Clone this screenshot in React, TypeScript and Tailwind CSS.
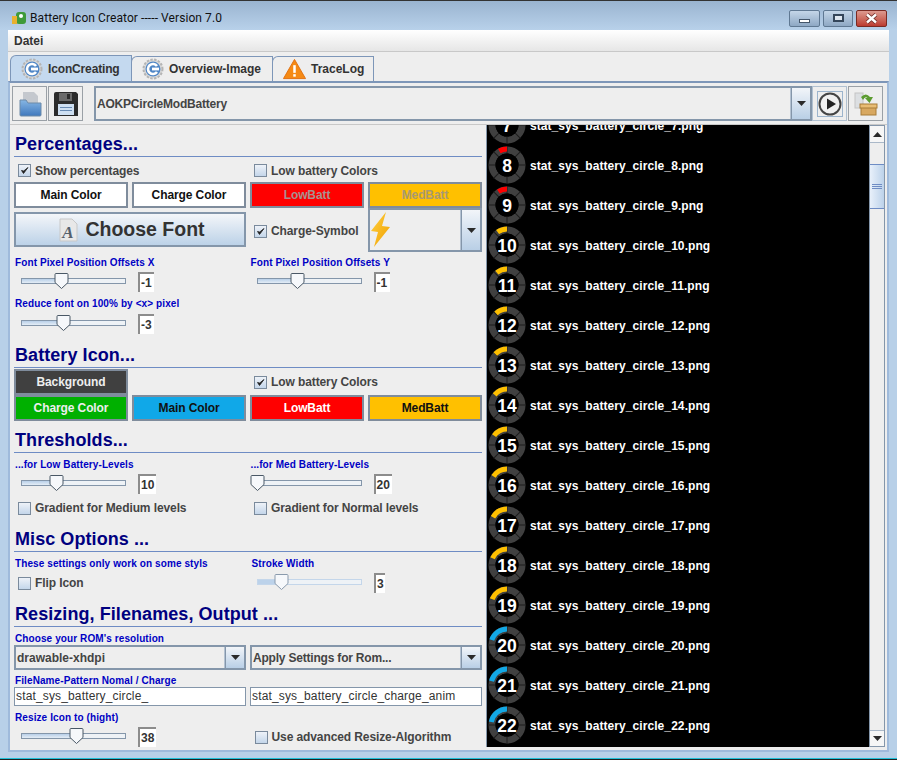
import { ReactNode } from 'react';

const FONT = "font-['Liberation_Sans',Arial,sans-serif]";

// battery row numbers visible in the list
const ROWS = Array.from({ length: 16 }, (_, i) => i + 7);

function arcColor(level: number) {
  if (level < 10) return '#ff0000';
  if (level < 20) return '#ffc000';
  return '#12a8e6';
}

function polar(r: number, deg: number) {
  const a = ((deg - 90) * Math.PI) / 180;
  return `${(20 + r * Math.cos(a)).toFixed(2)} ${(20 + r * Math.sin(a)).toFixed(2)}`;
}

function BatteryRing({ level }: { level: number }) {
  const angle = level * 3.6;
  return (
    <svg width="40" height="40" viewBox="0 0 40 40" className="shrink-0">
      <circle cx="20" cy="20" r="15" fill="none" stroke="#404040" strokeWidth="7" />
      {[0, 45, 90, 135].map((d) => (
        <line key={d} x1={20} y1={1} x2={20} y2={39} stroke="#1c1c1c" strokeWidth="1" transform={`rotate(${d} 20 20)`} />
      ))}
      <circle cx="20" cy="20" r="11.5" fill="#000" />
      <path
        d={`M ${polar(16, 0)} A 16 16 0 0 0 ${polar(16, -angle)}`}
        fill="none"
        stroke={arcColor(level)}
        strokeWidth="5"
      />
      <text x="20" y="26.5" textAnchor="middle" fontSize="17.5" fontWeight="700" fill="#fff" fontFamily="'Liberation Sans', Arial, sans-serif">
        {level}
      </text>
    </svg>
  );
}

function Heading({ children, className = '' }: { children: ReactNode; className?: string }) {
  return (
    <div className={`border-b border-[#6e8cc4] mx-[4px] flex items-end pb-[3px] text-[18px] font-bold tracking-[0.07px] text-[#000080] leading-none pl-px ${className}`}>
      {children}
    </div>
  );
}

function Label({ children, className = '' }: { children: ReactNode; className?: string }) {
  return <div className={`h-[12px] text-[10px] font-bold tracking-[0.1px] leading-[14px] text-[#0000c4] whitespace-nowrap ${className}`}>{children}</div>;
}

function Check({ label, checked = false, className = '' }: { label: string; checked?: boolean; className?: string }) {
  return (
    <div className={`flex items-center gap-[4px] text-[12px] font-bold tracking-[-0.1px] text-[#444] whitespace-nowrap ${className}`}>
      <span className="w-[13px] h-[13px] border border-[#7a8a9c] bg-gradient-to-b from-[#eef2f8] to-[#c4d6ea] flex items-center justify-center shrink-0">
        {checked && (
          <svg width="9" height="9" viewBox="0 0 9 9">
            <path d="M1.5 4.5 L3.5 7.5 L8 1.5 L3.7 5 Z" fill="#222" stroke="#222" strokeWidth="0.8" />
          </svg>
        )}
      </span>
      {label}
    </div>
  );
}

function ColorButton({ label, className = '' }: { label: string; className?: string }) {
  return (
    <div className={`h-[26px] border-2 border-[#7f8c9c] flex items-center justify-center text-[12px] font-bold tracking-[-0.1px] ${className}`}>{label}</div>
  );
}

function Slider({ pos, value, disabled = false, boxW = 'w-[16px]' }: { pos: number; value: string; disabled?: boolean; boxW?: string }) {
  const track = disabled ? 'border-[#c4d6ea]' : 'border-[#8496aa]';
  const fill = disabled ? 'bg-[#bcd2ea]' : 'bg-gradient-to-b from-[#b8cfe8] to-[#e4edf6]';
  return (
    <div className="flex items-center h-[20px] pl-[6px]">
      <div className={`relative w-[105px] h-[6px] mb-[2px] border ${track} bg-[#eef2f6]`}>
        <div className={`h-full ${fill}`} style={{ width: Math.max(0, pos + 6) }} />
        <svg width="16" height="17" viewBox="0 0 16 17" className="absolute top-[-6px]" style={{ left: pos - 1 }}>
          <path
            d="M1 1.5 Q1 .5 2 .5 H13 Q14 .5 14 1.5 V9.5 L7.5 15.5 L1 9.5 Z"
            fill="#f6f8fb"
            stroke={disabled ? '#8a9aac' : '#4a5866'}
          />
        </svg>
      </div>
      <div
        className={`ml-[12px] h-[20px] ${boxW} border-l-2 border-t-2 border-[#8c8c8c] bg-white text-[12px] font-bold text-[#333] leading-[18px] pl-px`}
      >
        {value}
      </div>
    </div>
  );
}

function ArrowButton({ className = '' }: { className?: string }) {
  return (
    <div className={`w-[19px] bg-gradient-to-b from-[#f2f5f9] to-[#b9cfe6] border-l border-[#8496aa] flex items-center justify-center ${className}`}>
      <svg width="9" height="5" viewBox="0 0 9 5">
        <path d="M0 0 H9 L4.5 5 Z" fill="#2a2a2a" />
      </svg>
    </div>
  );
}

function Combo({ text, className = '' }: { text: ReactNode; className?: string }) {
  return (
    <div className={`flex border-2 border-[#8496aa] bg-[#eeeeee] ${className}`}>
      <div className="flex-1 flex items-center pl-px text-[12px] font-bold text-[#444] whitespace-nowrap overflow-hidden border-r border-[#b4c2d2]">{text}</div>
      <ArrowButton />
    </div>
  );
}

function GearIcon() {
  return (
    <svg width="22" height="22" viewBox="0 0 22 22">
      <circle cx="11" cy="11" r="9.5" fill="#d8d8d8" stroke="#b4b4b4" strokeWidth="2" strokeDasharray="2.4 1.4" />
      <circle cx="11" cy="11" r="7.5" fill="#4f86c6" />
      <path d="M15 8 A5 5 0 1 0 15 14" fill="none" stroke="#fff" strokeWidth="2.6" />
      <rect x="10" y="9.6" width="7" height="2.8" fill="#fff" />
    </svg>
  );
}

function WarningIcon() {
  return (
    <svg width="23" height="22" viewBox="0 0 24 22">
      <path d="M12 1 L23.5 21 H.5 Z" fill="#f58a14" stroke="#e07010" strokeLinejoin="round" />
      <rect x="10.7" y="7" width="2.6" height="8" fill="#fff" />
      <rect x="10.7" y="16.4" width="2.6" height="2.6" fill="#fff" />
    </svg>
  );
}

function Tab({ icon, label, active = false, width }: { icon: ReactNode; label: string; active?: boolean; width: string }) {
  return (
    <div
      className={`${width} flex items-center border border-b-0 border-[#7d96b8] rounded-tl-[6px] text-[12px] font-bold text-[#333] gap-[5px] pl-[10px] -mr-px ${
        active ? 'h-[26px] bg-[#c4d9ef]' : 'h-[25px] bg-[#eeeeee]'
      }`}
    >
      {icon}
      <span className={active ? 'tracking-[-0.15px]' : ''}>{label}</span>
    </div>
  );
}

function ToolButton({ children, className = '' }: { children: ReactNode; className?: string }) {
  return <div className={`h-[35px] border border-[#9aa0a6] flex items-center justify-center ${className}`}>{children}</div>;
}

function WindowButton({ children, className = '' }: { children: ReactNode; className?: string }) {
  return (
    <div className={`h-[17px] rounded-[2px] border border-[#5f7892] flex items-center justify-center ${className}`}>{children}</div>
  );
}

export default function App() {
  return (
    <div className={`${FONT} w-[897px] h-[760px] overflow-hidden flex flex-col bg-[#b8d0e8] border-t border-[#333]`}>
      {/* title bar */}
      <div className="h-[29px] shrink-0 flex items-center pt-[5px] pl-[11px] pr-[10px] bg-gradient-to-b from-[#9ab4d0] to-[#b8d1ea]">
        <svg width="16" height="16" viewBox="0 0 16 16" className="mr-[3px]">
          <rect x="5" y="2" width="10" height="12" rx="3" fill="#3f9a3a" />
          <rect x="1" y="6" width="5" height="8" fill="#e8b030" />
          <circle cx="10" cy="6" r="2" fill="#fff" />
        </svg>
        <span className="font-['Roboto',sans-serif] text-[12px] tracking-[0.08px] text-[#111] whitespace-nowrap">Battery Icon Creator ----- Version 7.0</span>
        <div className="ml-auto flex gap-[3px]">
          <WindowButton className="w-[31px] bg-gradient-to-b from-[#c4d6e8] to-[#8ea8c4]">
            <span className="block w-[11px] h-[4px] mt-[5px] bg-white border border-[#44566a]" />
          </WindowButton>
          <WindowButton className="w-[30px] bg-gradient-to-b from-[#c4d6e8] to-[#8ea8c4]">
            <span className="block w-[11px] h-[8px] bg-white/60 border-2 border-[#34465a]" />
          </WindowButton>
          <WindowButton className="w-[31px] border-[#7a2a22] bg-gradient-to-b from-[#dc9a90] to-[#bb3a30]">
            <svg width="13" height="11" viewBox="0 0 13 11">
              <path d="M2 1.5 L11 9.5 M11 1.5 L2 9.5" stroke="#6a2a24" strokeWidth="4" />
              <path d="M2 1.5 L11 9.5 M11 1.5 L2 9.5" stroke="#fff" strokeWidth="2.4" />
            </svg>
          </WindowButton>
        </div>
      </div>

      {/* client area */}
      <div className="mx-[8px] shrink-0 bg-[#eeeeee] flex flex-col">
        <div className="h-[22px] shrink-0 flex items-center pl-[6px] pt-px bg-gradient-to-b from-white to-[#e6e6e6] border-b border-[#c8c8c8] text-[12px] font-bold text-[#333]">
          Datei
        </div>

        <div className="h-[29px] shrink-0 flex items-end pl-[2px]">
          <Tab active width="w-[122px]" icon={<GearIcon />} label="IconCreating" />
          <Tab width="w-[142px]" icon={<GearIcon />} label="Overview-Image" />
          <Tab width="w-[102px]" icon={<WarningIcon />} label="TraceLog" />
        </div>

        {/* tab panel */}
        <div className="h-[671px] shrink-0 border-2 border-[#9fbadb] border-t-[#7d96b8] flex flex-col">
          <div className="h-[42px] shrink-0 flex items-center pl-[2px] pr-[4px] border-b border-[#c8c8c8]">
            <ToolButton className="w-[35px]">
              <svg width="26" height="26" viewBox="0 0 26 26">
                <defs>
                  <linearGradient id="folderFill" x1="0" y1="0" x2="0" y2="1">
                    <stop offset="0" stopColor="#86b6e4" />
                    <stop offset="1" stopColor="#3f78bd" />
                  </linearGradient>
                </defs>
                <path d="M6 1 H17 L21 5 V14 H6 Z" fill="#c4c8ce" />
                <path d="M3 9 H9 L11 12 H24 V24 Q24 25 23 25 H4 Q3 25 3 24 Z" fill="url(#folderFill)" stroke="#6c8aa8" />
              </svg>
            </ToolButton>
            <ToolButton className="w-[35px] ml-[1px]">
              <svg width="26" height="26" viewBox="0 0 26 26">
                <path d="M1 3 Q1 1 3 1 H23 L25 3 V25 H1 Z" fill="#2c2c2c" />
                <rect x="6" y="2" width="13" height="8" fill="#6a6a6a" />
                <rect x="14" y="3" width="3" height="5" fill="#2c2c2c" />
                <rect x="5" y="13" width="16" height="11" fill="#cfe0f2" />
                <rect x="7" y="16" width="12" height="1" fill="#6a8cb4" />
                <rect x="7" y="19" width="12" height="1" fill="#6a8cb4" />
              </svg>
            </ToolButton>
            <Combo text={<span className="tracking-[-0.2px]">AOKPCircleModBattery</span>} className="flex-1 h-[35px] ml-[11px] border-[#8ea6c0]" />
            <ToolButton className="w-[35px] border-[#b0c0d0]">
              <div className="w-[26px] h-[26px] border border-[#9cb4cc] flex items-center justify-center">
                <svg width="24" height="24" viewBox="0 0 24 24">
                  <circle cx="12" cy="12" r="10.5" fill="#f0f0f0" stroke="#444" strokeWidth="2" />
                  <path d="M9 6.5 L18 12 L9 17.5 Z" fill="#222" />
                </svg>
              </div>
            </ToolButton>
            <ToolButton className="w-[35px] ml-[1px]">
              <svg width="24" height="24" viewBox="0 0 24 24">
                <rect x="1" y="1" width="8" height="15" fill="#dcdfe2" stroke="#c4c4c4" />
                <rect x="7" y="15" width="15" height="8" fill="#d8a860" stroke="#a87c38" />
                <rect x="6" y="12" width="17" height="4" fill="#e8bc74" stroke="#a87c38" />
                <path d="M7 5 Q12 0 16 5 L19 5 L15.5 11 L11 6 L13.5 6 Q11 4 9 8 Z" fill="#5c9c30" />
              </svg>
            </ToolButton>
          </div>

          <div className="flex-1 min-h-0 flex">
            {/* settings column */}
            <div className="w-[476px] shrink-0 flex flex-col">
              <Heading className="h-[32px]">Percentages...</Heading>
              <div className="grid grid-cols-2 h-[25px] pl-[8px] items-center pt-[2px]">
                <Check checked label="Show percentages" />
                <Check label="Low battery Colors" className="pl-[2px]" />
              </div>
              <div className="grid grid-cols-4 gap-x-[4px] mx-[4px]">
                <ColorButton label="Main Color" className="bg-white text-[#111]" />
                <ColorButton label="Charge Color" className="bg-white text-[#111]" />
                <ColorButton label="LowBatt" className="bg-[#ff0000] text-[#a89090]" />
                <ColorButton label="MedBatt" className="bg-[#ffc000] text-[#a89a70]" />
              </div>
              <div className="grid grid-cols-4 gap-x-[4px] mx-[4px] h-[44px]">
                <div className="col-span-2 h-[35px] mt-[4px] pl-[3px] pt-px border-2 border-[#8496aa] bg-gradient-to-b from-[#f4f6f9] to-[#bcd2e8] flex items-center justify-center gap-[7px]">
                  <svg width="20" height="24" viewBox="0 0 20 24">
                    <path d="M2 1 H14 L19 6 V23 H2 Z" fill="#e8e8e8" stroke="#c8c8c8" />
                    <text x="10" y="20" textAnchor="middle" fontSize="17" fontWeight="700" fontStyle="italic" fill="#55606c" fontFamily="'Liberation Serif', serif">A</text>
                  </svg>
                  <span className="text-[19.5px] font-bold text-[#333]">Choose Font</span>
                </div>
                <div className="flex items-center pl-[4px] pt-[2px]">
                  <Check checked label="Charge-Symbol" />
                </div>
                <div className="h-[44px] flex border-2 border-[#8496aa]">
                  <div className="flex-1 border-r border-[#b4c2d2] flex items-center pl-[1px]">
                    <svg width="20" height="36" viewBox="0 0 20 36">
                      <defs>
                        <linearGradient id="boltFill" x1="0" y1="0" x2="1" y2="1">
                          <stop offset="0" stopColor="#ffd040" />
                          <stop offset="1" stopColor="#f0a000" />
                        </linearGradient>
                      </defs>
                      <path d="M15 0 L0 19 L7 20 L3 35 L19 15 L11 14 Z" fill="url(#boltFill)" />
                    </svg>
                  </div>
                  <ArrowButton />
                </div>
              </div>
              <div className="grid grid-cols-2 mt-[4px] pl-[5px]">
                <div>
                  <Label>Font Pixel Position Offsets X</Label>
                  <div className="mt-[4px]"><Slider pos={33} value="-1" /></div>
                </div>
                <div>
                  <Label>Font Pixel Position Offsets Y</Label>
                  <div className="mt-[4px]"><Slider pos={33} value="-1" /></div>
                </div>
              </div>
              <Label className="pl-[5px] mt-[5px]">Reduce font on 100% by &lt;x&gt; pixel</Label>
              <div className="pl-[5px] mt-[5px]"><Slider pos={35} value="-3" /></div>

              <Heading className="h-[34px]">Battery Icon...</Heading>
              <div className="grid grid-cols-4 gap-x-[4px] mx-[4px] mt-[1px]">
                <ColorButton label="Background" className="bg-[#404040] text-[#eee]" />
                <div />
                <div className="col-span-2 flex items-center pl-[4px]">
                  <Check checked label="Low battery Colors" />
                </div>
                <ColorButton label="Charge Color" className="bg-[#00b000] text-[#eee]" />
                <ColorButton label="Main Color" className="bg-[#10a8e8] text-[#111]" />
                <ColorButton label="LowBatt" className="bg-[#ff0000] text-white" />
                <ColorButton label="MedBatt" className="bg-[#ffc000] text-[#111]" />
              </div>

              <Heading className="h-[32px]">Thresholds...</Heading>
              <div className="grid grid-cols-2 mt-[5px] pl-[5px]">
                <div>
                  <Label>...for Low Battery-Levels</Label>
                  <div className="mt-[4px]"><Slider pos={28} value="10" boxW="w-[18px]" /></div>
                </div>
                <div>
                  <Label>...for Med Battery-Levels</Label>
                  <div className="mt-[4px]"><Slider pos={-7} value="20" boxW="w-[18px]" /></div>
                </div>
              </div>
              <div className="grid grid-cols-2 pl-[8px] h-[28px] items-center">
                <Check label="Gradient for Medium levels" />
                <Check label="Gradient for Normal levels" className="pl-[2px]" />
              </div>

              <Heading className="h-[30px]">Misc Options ...</Heading>
              <div className="grid grid-cols-2 mt-[5px] pl-[5px]">
                <Label>These settings only work on some styls</Label>
                <Label className="pl-[1px]">Stroke Width</Label>
              </div>
              <div className="grid grid-cols-2 pl-[8px] h-[28px] items-center">
                <Check label="Flip Icon" />
                <div className="-ml-[1px]"><Slider disabled pos={17} value="3" boxW="w-[11px]" /></div>
              </div>

              <Heading className="h-[30px]">Resizing, Filenames, Output ...</Heading>
              <Label className="pl-[5px] mt-[5px]">Choose your ROM's resolution</Label>
              <div className="grid grid-cols-2 gap-x-[4px] mx-[4px] mt-[1px]">
                <Combo text="drawable-xhdpi" className="h-[25px]" />
                <Combo text={<span className="tracking-[-0.2px]">Apply Settings for Rom...</span>} className="h-[25px]" />
              </div>
              <Label className="pl-[5px] mt-[4px]">FileName-Pattern Nomal / Charge</Label>
              <div className="grid grid-cols-2 gap-x-[4px] mx-[4px] mt-[1px]">
                <div className="h-[19px] border border-[#8496aa] bg-white text-[12px] tracking-[0.15px] text-[#333] pl-px leading-[17px] whitespace-nowrap overflow-hidden">stat_sys_battery_circle_</div>
                <div className="h-[19px] border border-[#8496aa] bg-white text-[12px] tracking-[0.15px] text-[#333] pl-px leading-[17px] whitespace-nowrap overflow-hidden">stat_sys_battery_circle_charge_anim</div>
              </div>
              <Label className="pl-[5px] mt-[5px]">Resize Icon to (hight)</Label>
              <div className="grid grid-cols-2 pl-[5px] mt-[4px] items-center">
                <Slider pos={48} value="38" boxW="w-[18px]" />
                <Check label="Use advanced Resize-Algorithm" className="pl-[4px]" />
              </div>
            </div>

            {/* preview list */}
            <div className="flex-1 min-w-0 flex pr-[2px] pb-[3px]">
              <div className="flex-1 min-w-0 bg-black border-l border-[#8496aa] overflow-hidden">
                <div className="-mt-[20px]">
                  {ROWS.map((n) => (
                    <div key={n} className="h-[40px] flex items-center">
                      <BatteryRing level={n} />
                      <span className="ml-[3px] pt-px text-[12px] font-bold tracking-[0.07px] text-white">stat_sys_battery_circle_{n}.png</span>
                    </div>
                  ))}
                </div>
              </div>
              <div className="w-[16px] shrink-0 flex flex-col border border-[#8496aa] bg-[#eeeeee]">
                <div className="h-[17px] shrink-0 flex items-center justify-center border-b border-[#aab8c8] bg-[#f6f6f6]">
                  <svg width="9" height="5" viewBox="0 0 9 5"><path d="M0 5 H9 L4.5 0 Z" fill="#2a2a2a" /></svg>
                </div>
                <div className="h-[21px] shrink-0" />
                <div className="h-[45px] shrink-0 border-y border-[#6e8cc4] bg-gradient-to-r from-[#e8f0fa] to-[#bcd2ea] flex flex-col items-center justify-center gap-px">
                  <span className="w-[10px] h-px bg-[#6e8cc4]" />
                  <span className="w-[10px] h-px bg-[#6e8cc4]" />
                  <span className="w-[10px] h-px bg-[#6e8cc4]" />
                </div>
                <div className="flex-1" />
                <div className="h-[16px] shrink-0 flex items-center justify-center border-t border-[#aab8c8] bg-[#f6f6f6]">
                  <svg width="9" height="5" viewBox="0 0 9 5"><path d="M0 0 H9 L4.5 5 Z" fill="#2a2a2a" /></svg>
                </div>
              </div>
            </div>
          </div>
        </div>
      </div>

      {/* bottom window edge */}
      <div className="mt-auto h-[2px] shrink-0 bg-[#20c0d8] border-b border-[#222]" />
    </div>
  );
}
